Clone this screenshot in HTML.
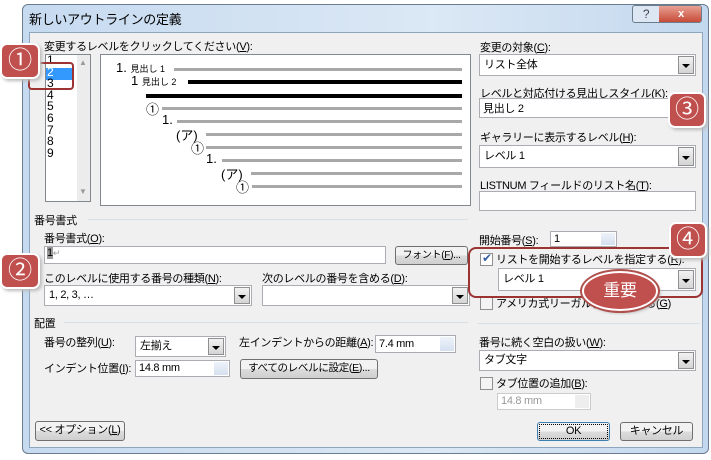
<!DOCTYPE html>
<html><head><meta charset="utf-8"><style>
*{box-sizing:border-box;margin:0;padding:0}
body{width:711px;height:460px;background:#fff;position:relative;overflow:hidden;font-family:"Liberation Sans","Noto Sans CJK JP",sans-serif;font-size:11px;color:#000;letter-spacing:-0.3px}
.a{position:absolute;white-space:nowrap}
.inp{position:absolute;background:#fff;border:1px solid #abadb3;white-space:nowrap}
.sel{position:absolute;background:#fff;border:1px solid #abadb3;padding:2px 4px;line-height:16px;white-space:nowrap}
.dd{position:absolute;right:1px;top:1px;bottom:1px;width:16px;background:linear-gradient(#f2f2f2,#d4d4d4);border:1px solid #8e8f8f}
.dd:after{content:"";position:absolute;left:3px;top:45%;border-left:4px solid transparent;border-right:4px solid transparent;border-top:4px solid #000}
.btn{position:absolute;border:1px solid #707070;border-radius:3px;background:linear-gradient(#f2f2f2 50%,#dddddd 50%,#cfcfcf);text-align:center;line-height:17px;white-space:nowrap}
.spin{position:absolute;right:1px;top:1px;bottom:1px;width:14px;background:linear-gradient(#eef3fa,#d5e0ef)}
.gl{position:absolute;height:3px;background:#a8a8a8}
.bl{position:absolute;height:4px;background:#000}
.badge{position:absolute;background:#c0504d;border-radius:7px;color:#fff;font-size:24px;text-align:center;box-shadow:2px 2px 3px #bbb;border:2px solid #fff}
.cb{position:absolute;width:13px;height:13px;border:1px solid #8f8f8f;background:#f4f4f4}
.sep{position:absolute;height:1px;background:#d5dfe5}
.pv{position:absolute;white-space:nowrap;font-size:13px;letter-spacing:0}
</style></head><body>
<div class="a" style="left:22px;top:4px;width:687px;height:450px;border:1px solid #6a7c8e;border-radius:6px;background:linear-gradient(90deg,#c6daf0,#dbe8f5 60%,#c3d8ee)"></div>
<div class="a" style="left:29px;top:32px;width:674px;height:416px;background:#f0f0f0;border:1px solid #8ea5bf"></div>
<div class="a" style="left:29px;top:9px;font-size:13px">新しいアウトラインの定義</div>
<div class="a" style="left:632px;top:5px;width:70px;height:18px;border:1px solid #6b7c8d;border-radius:3px;overflow:hidden;background:#dce7f3">
<div class="a" style="left:0;top:0;width:26px;height:16px;text-align:center;color:#445;font-size:12px;line-height:16px">?</div>
<div class="a" style="left:26px;top:0;width:44px;height:16px;background:linear-gradient(#e8a193,#c74a37);color:#fff;text-align:center;font-weight:bold;line-height:16px">x</div></div>

<div class="a" style="left:44px;top:38px">変更するレベルをクリックしてください(<u>V</u>):</div>
<div class="inp" style="left:45px;top:54px;width:46px;height:148px;border-color:#828790"></div>
<div class="a" style="left:77px;top:55px;width:13px;height:146px;background:#ececec"></div>
<div class="a" style="left:79px;top:58px;font-size:8px;color:#999">▲</div>
<div class="a" style="left:79px;top:187px;font-size:8px;color:#999">▼</div>
<div class="a" style="left:46px;top:68px;width:26px;height:12px;background:#3399ff"></div>
<div class="a" style="left:47px;top:55px;line-height:11.6px;font-size:12px">1<br><span style="color:#fff">2</span><br>3<br>4<br>5<br>6<br>7<br>8<br>9</div>
<div class="a" style="left:28px;top:62px;width:46px;height:28px;border:2px solid #9b3433;border-radius:4px"></div>

<div class="inp" style="left:100px;top:54px;width:371px;height:152px;border-color:#828790"></div>
<div class="gl" style="left:174px;top:68px;width:288px"></div>
<div class="bl" style="left:188px;top:80px;width:274px"></div>
<div class="bl" style="left:146px;top:94px;width:316px"></div>
<div class="gl" style="left:162px;top:107px;width:300px"></div>
<div class="gl" style="left:177px;top:120px;width:285px"></div>
<div class="gl" style="left:206px;top:133px;width:256px"></div>
<div class="gl" style="left:206px;top:146px;width:256px"></div>
<div class="gl" style="left:222px;top:159px;width:240px"></div>
<div class="gl" style="left:251px;top:172px;width:211px"></div>
<div class="gl" style="left:252px;top:185px;width:210px"></div>
<div class="pv" style="left:116px;top:60px">1. <span style="font-size:9px">見出し 1</span></div>
<div class="pv" style="left:131px;top:73px">1 <span style="font-size:9px">見出し 2</span></div>
<div class="pv" style="left:146px;top:99px">①</div>
<div class="pv" style="left:162px;top:112px">1.</div>
<div class="pv" style="left:176px;top:125px">(ア)</div>
<div class="pv" style="left:191px;top:138px">①</div>
<div class="pv" style="left:206px;top:151px">1.</div>
<div class="pv" style="left:221px;top:164px">(ア)</div>
<div class="pv" style="left:236px;top:177px">①</div>

<div class="a" style="left:480px;top:39px">変更の対象(<u>C</u>):</div>
<div class="sel" style="left:479px;top:54px;width:217px;height:22px">リスト全体<div class="dd"></div></div>
<div class="a" style="left:480px;top:85px">レベルと対応付ける見出しスタイル(<u>K</u>):</div>
<div class="inp" style="left:479px;top:98px;width:217px;height:20px;padding:1px 3px">見出し 2</div>
<div class="a" style="left:480px;top:129px">ギャラリーに表示するレベル(<u>H</u>):</div>
<div class="sel" style="left:479px;top:145px;width:217px;height:23px">レベル 1<div class="dd"></div></div>
<div class="a" style="left:480px;top:177px">LISTNUM フィールドのリスト名(<u>T</u>):</div>
<div class="inp" style="left:479px;top:191px;width:217px;height:20px"></div>

<div class="a" style="left:34px;top:212px">番号書式</div>
<div class="sep" style="left:88px;top:219px;width:380px"></div>
<div class="a" style="left:44px;top:230px">番号書式(<u>O</u>):</div>
<div class="inp" style="left:44px;top:246px;width:342px;height:18px;padding:0 2px"><span style="background:#999">1</span><span style="color:#999;font-size:9px">↵</span></div>
<div class="btn" style="left:395px;top:246px;width:73px;height:19px;font-size:10px">フォント(<u>F</u>)...</div>
<div class="a" style="left:44px;top:270px">このレベルに使用する番号の種類(<u>N</u>):</div>
<div class="sel" style="left:44px;top:285px;width:208px;height:21px;line-height:14px">1, 2, 3, …<div class="dd"></div></div>
<div class="a" style="left:262px;top:270px">次のレベルの番号を含める(<u>D</u>):</div>
<div class="sel" style="left:262px;top:285px;width:208px;height:21px"><div class="dd"></div></div>

<div class="a" style="left:479px;top:232px">開始番号(<u>S</u>):</div>
<div class="inp" style="left:550px;top:231px;width:67px;height:16px;line-height:14px;padding-left:3px">1<div class="spin"></div></div>
<div class="cb" style="left:480px;top:253px;background:#fff"><span class="a" style="left:1px;top:-3px;color:#3a5fa6;font-size:12px">✔</span></div>
<div class="a" style="left:496px;top:251px">リストを開始するレベルを指定する(<u>R</u>):</div>
<div class="sel" style="left:498px;top:268px;width:198px;height:23px">レベル 1<div class="dd"></div></div>
<div class="cb" style="left:480px;top:297px"></div>
<div class="a" style="left:496px;top:295px">アメリカ式リーガル番号を付ける(<u>G</u>)</div>
<div class="a" style="left:468px;top:247px;width:235px;height:51px;border:2px solid #9b3433;border-radius:8px"></div>
<div class="a" style="left:582px;top:271px;width:76px;height:40px;border-radius:50%;background:#c0504d;border:2px solid #fff;box-shadow:0 0 0 2px #b0504d,2px 2px 3px #aaa;color:#fff;font-size:17px;text-align:center;line-height:36px">重要</div>
<div class="badge" style="left:668px;top:92px;width:38px;height:36px;line-height:32px">③</div>
<div class="badge" style="left:669px;top:222px;width:38px;height:36px;line-height:32px">④</div>
<div class="badge" style="left:0px;top:253px;width:40px;height:36px;line-height:32px">②</div>
<div class="badge" style="left:0px;top:43px;width:40px;height:36px;line-height:32px">①</div>

<div class="sep" style="left:478px;top:323px;width:222px"></div>
<div class="a" style="left:34px;top:315px">配置</div>
<div class="sep" style="left:64px;top:322px;width:404px"></div>
<div class="a" style="left:44px;top:334px">番号の整列(<u>U</u>):</div>
<div class="sel" style="left:135px;top:336px;width:91px;height:21px;line-height:15px">左揃え<div class="dd"></div></div>
<div class="a" style="left:239px;top:334px">左インデントからの距離(<u>A</u>):</div>
<div class="inp" style="left:375px;top:335px;width:81px;height:18px;padding-left:3px;line-height:16px">7.4 mm<div class="spin"></div></div>
<div class="a" style="left:44px;top:360px">インデント位置(<u>I</u>):</div>
<div class="inp" style="left:135px;top:360px;width:95px;height:17px;padding-left:3px;line-height:15px">14.8 mm<div class="spin"></div></div>
<div class="btn" style="left:240px;top:359px;width:138px;height:20px;font-size:10.5px">すべてのレベルに設定(<u>E</u>)...</div>

<div class="a" style="left:479px;top:334px">番号に続く空白の扱い(<u>W</u>):</div>
<div class="sel" style="left:479px;top:350px;width:217px;height:21px;line-height:14px">タブ文字<div class="dd"></div></div>
<div class="cb" style="left:480px;top:377px"></div>
<div class="a" style="left:496px;top:375px">タブ位置の追加(<u>B</u>):</div>
<div class="inp" style="left:497px;top:393px;width:94px;height:17px;padding-left:3px;line-height:15px;color:#999;border-color:#ccc">14.8 mm<div class="spin" style="background:#eee"></div></div>

<div class="btn" style="left:35px;top:421px;width:90px;height:20px">&lt;&lt; オプション(<u>L</u>)</div>
<div class="btn" style="left:537px;top:422px;width:73px;height:19px;border-color:#3c7fb1;outline:1px dotted #000;outline-offset:-3px">OK</div>
<div class="btn" style="left:620px;top:422px;width:73px;height:19px">キャンセル</div>
</body></html>
